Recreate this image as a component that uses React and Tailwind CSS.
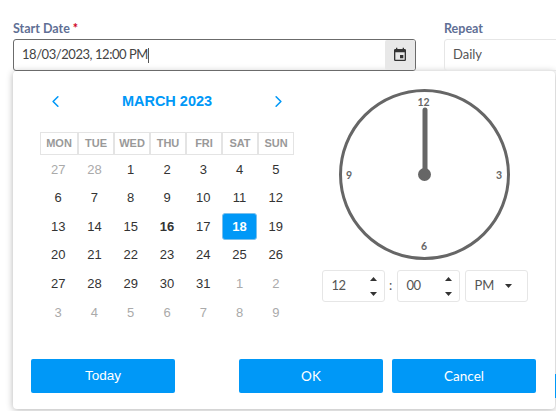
import { ChevronLeft, ChevronRight } from 'lucide-react'

const heads = ['MON', 'TUE', 'WED', 'THU', 'FRI', 'SAT', 'SUN']

const days = [
  [27, 28, 1, 2, 3, 4, 5],
  [6, 7, 8, 9, 10, 11, 12],
  [13, 14, 15, 16, 17, 18, 19],
  [20, 21, 22, 23, 24, 25, 26],
  [27, 28, 29, 30, 31, 1, 2],
  [3, 4, 5, 6, 7, 8, 9],
]

const isMuted = (row, col) => (row === 0 && col < 2) || (row === 4 && col > 4) || row === 5

const Day = ({ value, row, col }) => {
  if (value === 18) {
    return (
      <div className="flex items-center justify-center h-[28.6px]">
        <span className="flex items-center justify-center w-[35px] h-[27px] rounded-[3px] bg-[#0098f7] border border-[#7cc0ec] text-white font-bold">
          18
        </span>
      </div>
    )
  }
  return (
    <div
      className={`flex items-center justify-center h-[28.6px] ${
        isMuted(row, col) ? 'text-[#aaaaaa]' : 'text-[#333333]'
      } ${value === 16 ? 'font-bold' : ''}`}
    >
      {value}
    </div>
  )
}

const Stepper = ({ value }) => (
  <div className="relative flex items-center w-[63px] h-[32px] pl-[9px] bg-white border border-[#e6e6e6] rounded-[3px] text-[13px] tracking-[-0.6px] text-[#555555]">
    {value}
    <div className="absolute right-[6px] top-[5px] flex flex-col gap-[9px]">
      <svg width="9" height="6" viewBox="0 0 9 6">
        <path d="M4.5 1 8 5H1z" fill="#333333" />
      </svg>
      <svg width="9" height="6" viewBox="0 0 9 6">
        <path d="M1 1h7L4.5 5z" fill="#333333" />
      </svg>
    </div>
  </div>
)

const Clock = () => (
  <svg width="176" height="176" viewBox="0 0 176 176" className="block">
    <circle cx="87.5" cy="87.5" r="84" fill="none" stroke="#666666" strokeWidth="3" />
    <line x1="88" y1="88" x2="88" y2="23" stroke="#666666" strokeWidth="5" strokeLinecap="round" />
    <circle cx="87.5" cy="87.5" r="6.5" fill="#666666" />
    <g fontFamily="Lato, sans-serif" fontSize="10.5" fontWeight="700" fill="#666666" textAnchor="middle">
      <text x="86.5" y="19">12</text>
      <text x="162" y="92">3</text>
      <text x="87" y="163">6</text>
      <text x="12" y="92">9</text>
    </g>
  </svg>
)

export default function App() {
  return (
    <div className="relative w-[556px] h-[411px] overflow-hidden bg-white pl-[13px] pt-[21px] font-['Lato',sans-serif]">
      <div className="flex gap-[28px] w-[600px]">
        <div>
          <div className="h-[18px] text-[12.5px] leading-[16px] font-bold text-[#5f6f95]">
            Start Date <span className="text-[#d0021b]">*</span>
          </div>
          <div className="flex items-center w-[403px] h-[32px] pl-[8px] border border-[#6b6b6b] rounded-[3px] text-[13px] tracking-[-0.45px] text-[#444444]">
            <span>18/03/2023, 12:00 PM</span>
            <span className="w-px h-[15px] bg-[#555555]" />
            <span className="ml-auto flex items-center justify-center w-[30px] h-[30px] bg-[#e8e8e8] rounded-[2px]">
              <svg width="16" height="16" viewBox="0 0 24 24" fill="#333333">
                <path d="M19 3h-1V1h-2v2H8V1H6v2H5a2 2 0 0 0-2 2v14a2 2 0 0 0 2 2h14a2 2 0 0 0 2-2V5a2 2 0 0 0-2-2zm0 16H5V8h14v11zm-2-7h-5v5h5v-5z" />
              </svg>
            </span>
          </div>
        </div>
        <div>
          <div className="h-[18px] text-[12.5px] leading-[16px] font-bold text-[#5f6f95]">Repeat</div>
          <div className="flex items-center w-[150px] h-[32px] pl-[8px] border border-[#e6e6e6] rounded-[3px] text-[13px] text-[#555555]">
            Daily
          </div>
        </div>
      </div>

      <div className="flex flex-col w-[542px] h-[338px] bg-white rounded-[4px] shadow-[0_1px_7px_rgba(0,0,0,0.3)]">
        <div className="flex flex-1">
          <div className="w-[310px] pl-[27px] font-['Liberation_Sans',sans-serif]">
            <div className="flex items-center justify-between w-[254px] h-[61px] pl-[6px] pr-[6px]">
              <ChevronLeft size={19} strokeWidth={2} className="text-[#0098f7]" />
              <span className="text-[14.5px] font-bold text-[#0098f7]">MARCH 2023</span>
              <ChevronRight size={19} strokeWidth={2} className="text-[#0098f7]" />
            </div>
            <div className="grid grid-cols-7 w-[254px] border border-[#e4e4e4] text-[11px] font-bold text-[#999999]">
              {heads.map((h, i) => (
                <div
                  key={h}
                  className={`flex items-center justify-center h-[21px] ${i > 0 ? 'border-l-2 border-[#e4e4e4]' : ''}`}
                >
                  {h}
                </div>
              ))}
            </div>
            <div className="grid grid-cols-7 w-[254px] text-[13px]">
              {days.map((week, row) =>
                week.map((value, col) => <Day key={`${row}-${col}`} value={value} row={row} col={col} />)
              )}
            </div>
          </div>
          <div className="flex flex-col items-center w-[230px] pt-[16px] pr-[27px]">
            <Clock />
            <div className="flex items-center mt-[7px] shrink-0">
              <Stepper value="12" />
              <span className="w-[12px] text-center text-[13px] text-[#555555]">:</span>
              <Stepper value="00" />
              <div className="flex items-center justify-between w-[63px] h-[32px] ml-[5px] pl-[9px] pr-[14px] border border-[#e6e6e6] rounded-[3px] text-[13px] text-[#555555]">
                PM
                <svg width="9" height="6" viewBox="0 0 9 6">
                  <path d="M1 1h7L4.5 5z" fill="#333333" />
                </svg>
              </div>
            </div>
          </div>
        </div>
        <div className="flex pl-[18px] pb-[16px] text-[13.5px] text-white">
          <button className="w-[144px] h-[34px] bg-[#0098f7] rounded-[2px] font-['Liberation_Sans',sans-serif]">Today</button>
          <button className="w-[144px] h-[34px] ml-[64px] bg-[#0098f7] rounded-[2px]">OK</button>
          <button className="w-[144px] h-[34px] ml-[9px] bg-[#0098f7] rounded-[2px]">Cancel</button>
        </div>
      </div>
      <span className="absolute right-0 top-[374px] w-px h-[24px] bg-[#0098f7]" />
    </div>
  )
}
